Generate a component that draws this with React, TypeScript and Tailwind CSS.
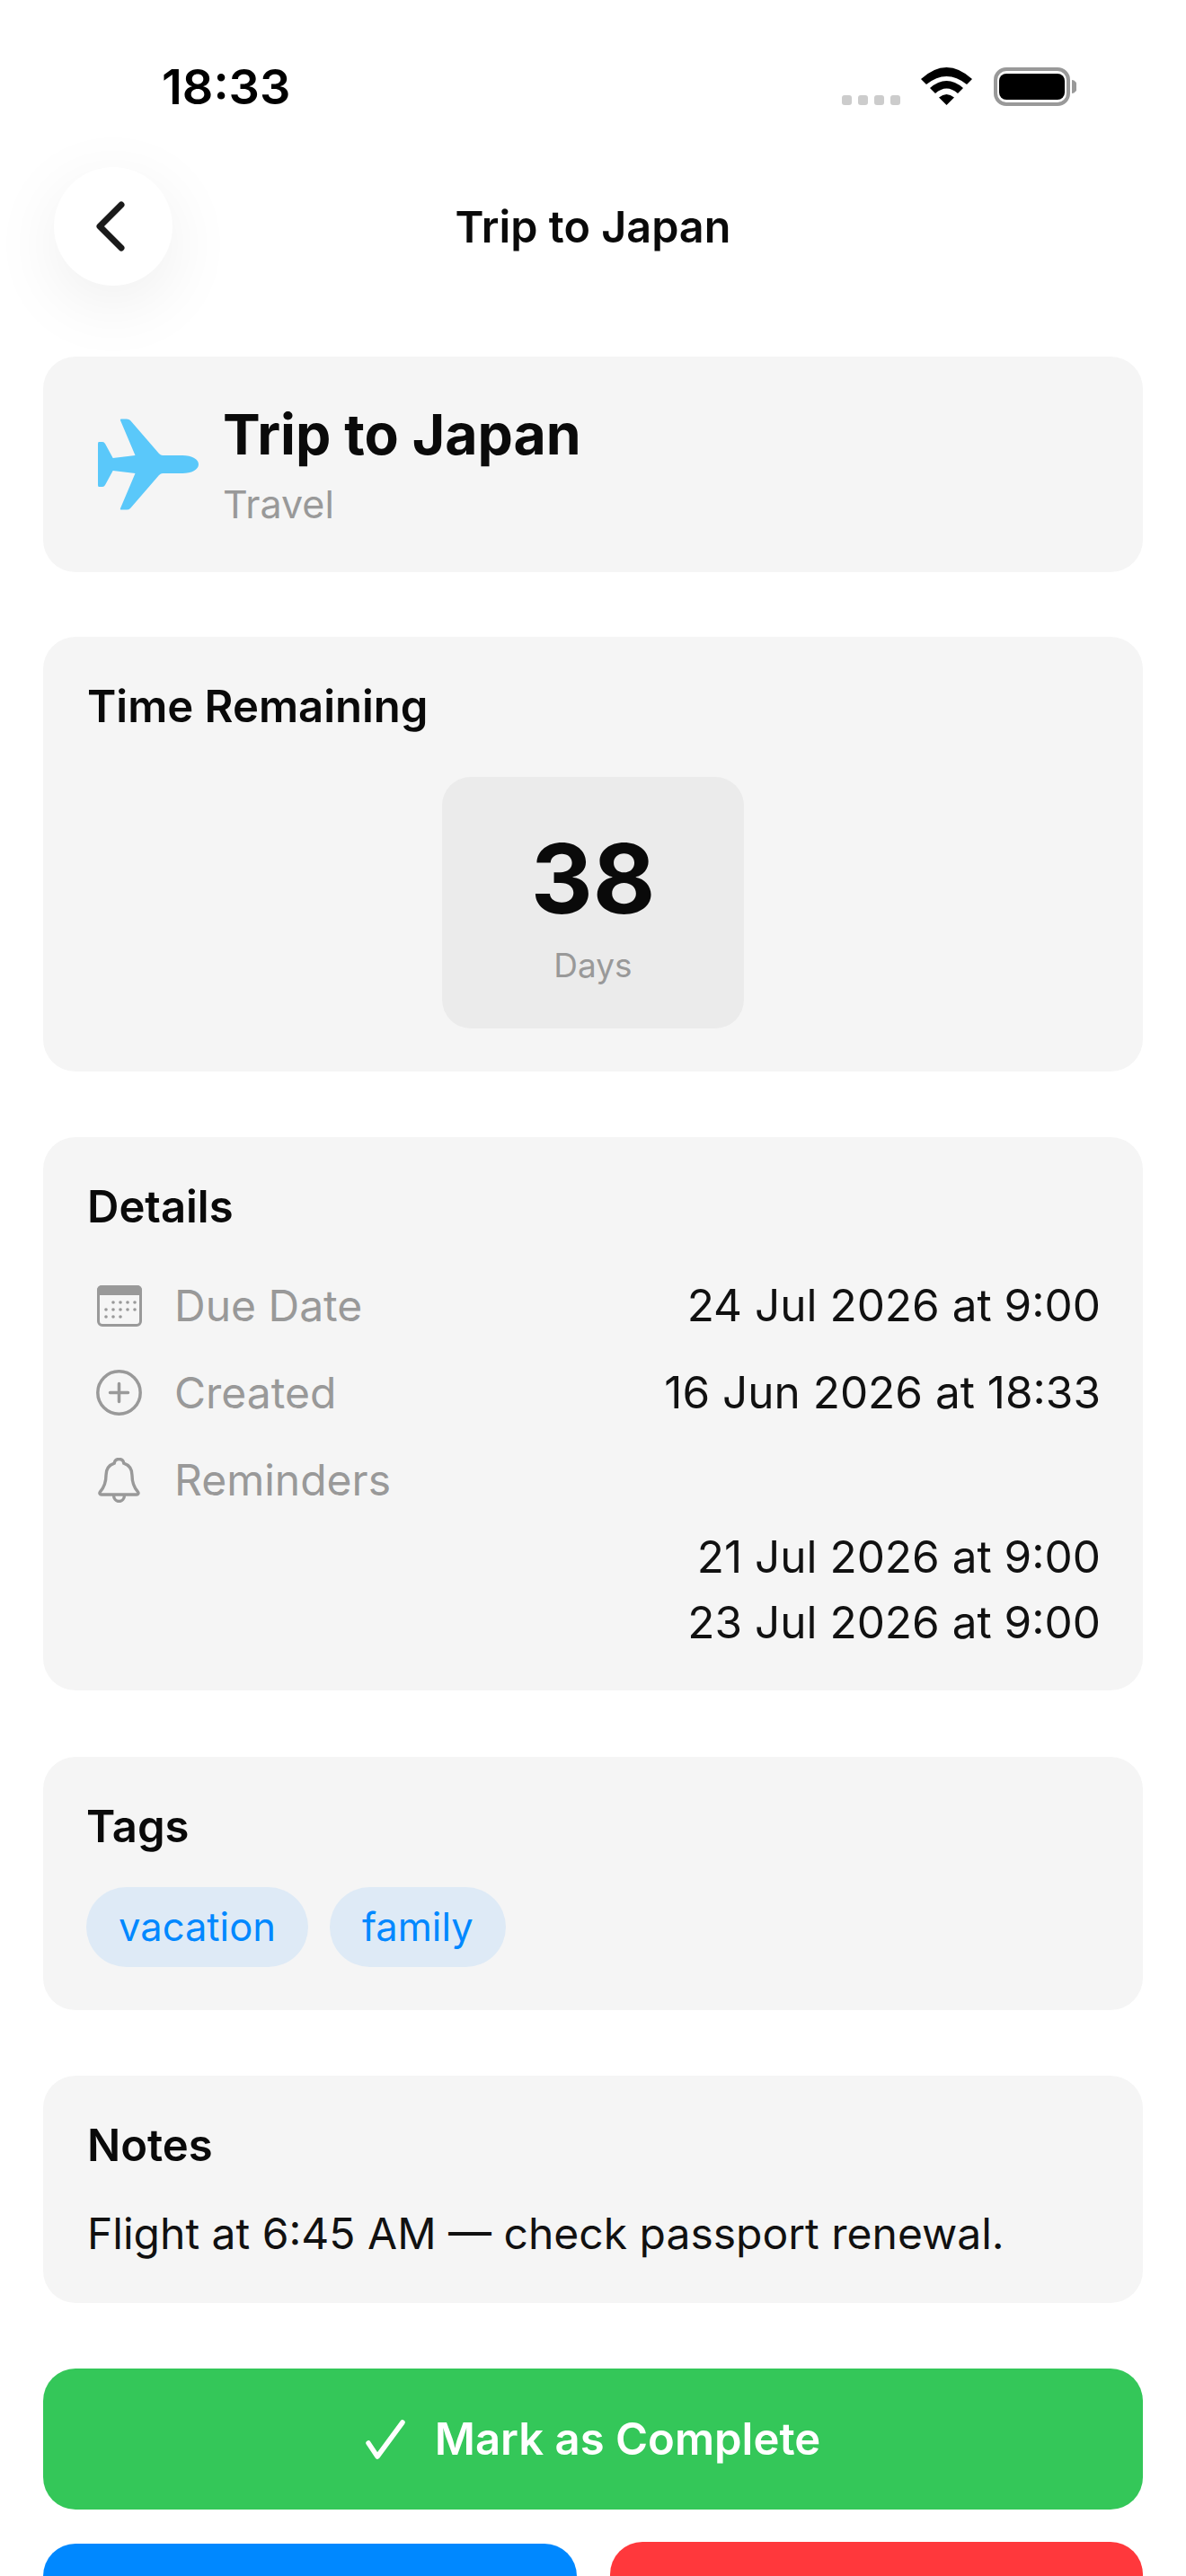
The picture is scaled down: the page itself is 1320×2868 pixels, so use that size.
const font = "font-['Inter',sans-serif]";

function Card({ className, children }: { className: string; children: React.ReactNode }) {
  return <section className={`rounded-[36px] bg-[#f5f5f5] ${className}`}>{children}</section>;
}

function Plane() {
  return (
    <svg viewBox="0 0 112 102" className="h-[102px] w-[112px] shrink-0" fill="#5ac8fa">
      <path d="M112 51C112 45 104 41 94 41L72 41Q70 41 68 39L36 2Q34.5 .5 32 .5L26 .5Q24.5 .5 25 2L41.5 41L16.7 44L8 28Q7 26 5 26L1 26Q0 26 0 28L0 74Q0 76 1 76L5 76Q7 76 8 74L16.7 58L41.5 61L25 100Q24.5 101.5 26 101.5L32 101.5Q34.5 101.5 36 100L68 63Q70 61 72 61L94 61C104 61 112 57 112 51Z" />
    </svg>
  );
}

function CalendarIcon() {
  const dots = [
    [20, 20], [28, 20], [36, 20], [44, 20],
    [12, 28], [20, 28], [28, 28], [36, 28], [44, 28],
    [12, 36], [20, 36], [28, 36],
  ];
  return (
    <svg viewBox="0 0 50 46" className="h-[46px] w-[50px]">
      <rect x="1.5" y="1.5" width="47" height="43" rx="4.5" fill="none" stroke="#999" strokeWidth="3" />
      <path d="M0 11V5a5 5 0 0 1 5-5h40a5 5 0 0 1 5 5v6z" fill="#999" />
      {dots.map(([x, y]) => (
        <circle key={`${x}-${y}`} cx={x - 2} cy={y - 1} r="1.8" fill="#999" />
      ))}
    </svg>
  );
}

function PlusIcon() {
  return (
    <svg viewBox="0 0 51 51" className="h-[51px] w-[51px]" fill="none" stroke="#999" strokeWidth="3.5" strokeLinecap="round">
      <circle cx="25.5" cy="25.5" r="23.7" />
      <path d="M25.5 15.5v20M15.5 25.5h20" />
    </svg>
  );
}

function BellIcon() {
  return (
    <svg viewBox="0 0 47 50" className="h-[50px] w-[47px]" fill="none" stroke="#999" strokeWidth="3.4" strokeLinejoin="round">
      <path d="M23.5 1.5c3.2 0 5 2.2 5.3 4.7 6 2 9.2 7 9.2 13.3 0 8.5 1.6 13 6.4 18.4 1.2 1.4.4 3.1-1.4 3.1H3.900c-1.800 0-2.600-1.700-1.400-3.100C7.300 32.500 9 28 9 19.500 9 13.200 12.200 8.200 18.200 6.200 18.500 3.700 20.300 1.500 23.500 1.500Z" />
      <path d="M17.500 41.500c0 4 2.600 7 6 7s6-3 6-7" />
    </svg>
  );
}

function DetailRow({ icon, label, value }: { icon: React.ReactNode; label: string; value?: string }) {
  return (
    <div className="flex h-[49px] items-center justify-between">
      <div className="flex items-center">
        <div className="flex w-[97px] justify-center pr-[36px] pl-[10px]">{icon}</div>
        <span className="text-[48px] leading-[49px] text-[#999999]">{label}</span>
      </div>
      {value && <span className="text-[49.500px] leading-[49px] text-[#111111]">{value}</span>}
    </div>
  );
}

export default function App() {
  return (
    <main className={`h-[2868px] w-[1320px] overflow-hidden bg-white ${font}`}>
      <div className="flex h-[186px] items-start justify-between pt-[75px] pr-[122px] pl-[180px]">
        <span className="text-[54px] leading-[44px] font-semibold text-black">18:33</span>
        <div className="flex items-start">
          <div className="mt-[31px] mr-[23px] flex gap-[7px]">
            <span className="h-[11px] w-[11px] rounded-[3px] bg-[#cccccc]" />
            <span className="h-[11px] w-[11px] rounded-[3px] bg-[#cccccc]" />
            <span className="h-[11px] w-[11px] rounded-[3px] bg-[#cccccc]" />
            <span className="h-[11px] w-[11px] rounded-[3px] bg-[#cccccc]" />
          </div>
          <svg viewBox="0 0 57 42" className="mr-[24px] h-[42px] w-[57px]" fill="#000">
            <path d="M0 13Q28.500 -13 57 13L51 19Q28.500 1 6 19Z" />
            <path d="M10 23Q28.500 7 47 23L41 29Q28.500 18 16 29Z" />
            <path d="M28.500 42L20 33.500Q28.500 26.500 37 33.500Z" />
          </svg>
          <svg viewBox="0 0 92 43" className="h-[43px] w-[92px]">
            <rect x="2" y="2" width="81" height="39" rx="12" fill="none" stroke="#999" strokeWidth="4" />
            <rect x="6" y="7" width="73" height="29" rx="8" fill="#000" />
            <path d="M87 14a6 7.500 0 0 1 0 15z" fill="#999" />
          </svg>
        </div>
      </div>

      <header className="relative z-10 grid h-[132px] grid-cols-[1fr_auto_1fr] items-center px-[60px]">
        <button className="flex h-[132px] w-[132px] items-center justify-center rounded-full bg-white shadow-[0_20px_80px_rgba(0,0,0,0.07)]">
          <svg viewBox="0 0 32 56" className="mr-[6px] h-[56px] w-[32px]" fill="none" stroke="#1a1a1a" strokeWidth="7" strokeLinecap="round" strokeLinejoin="round">
            <path d="M28 4 4 28l24 24" />
          </svg>
        </button>
        <h1 className="translate-y-[1px] text-[48.500px] leading-[60px] font-semibold text-[#0a0a0a]">Trip to Japan</h1>
      </header>

      <div className="flex flex-col px-[48px] pt-[79px]">
        <Card className="flex h-[240px] items-center pr-[48px] pl-[61px]">
          <Plane />
          <div className="ml-[27px] flex flex-col">
            <h2 className="text-[62.500px] leading-[70px] font-bold text-[#0a0a0a]">Trip to Japan</h2>
            <p className="mt-[17px] text-[43px] leading-[52px] text-[#999999]">Travel</p>
          </div>
        </Card>

        <Card className="mt-[72px] flex h-[484px] flex-col pt-[57px]">
          <h3 className="pl-[49px] text-[49px] leading-[42px] font-semibold text-[#0a0a0a]">Time Remaining</h3>
          <div className="mx-auto mt-[57px] flex h-[280px] w-[336px] flex-col items-center rounded-[32px] bg-[#ebebeb] pt-[50px]">
            <span className="text-[107px] leading-[126px] font-bold text-[#0a0a0a]">38</span>
            <span className="mt-[16px] text-[37px] leading-[36px] text-[#999999]">Days</span>
          </div>
        </Card>

        <Card className="mt-[73px] flex h-[616px] flex-col pt-[57px] pr-[47px] pl-[49px]">
          <h3 className="text-[49px] leading-[42px] font-semibold text-[#0a0a0a]">Details</h3>
          <div className="mt-[64px] flex flex-col gap-[48px]">
            <DetailRow icon={<CalendarIcon />} label="Due Date" value="24 Jul 2026 at 9:00" />
            <DetailRow icon={<PlusIcon />} label="Created" value="16 Jun 2026 at 18:33" />
            <DetailRow icon={<BellIcon />} label="Reminders" />
          </div>
          <div className="mt-[37px] flex flex-col items-end gap-[24px] text-[49.500px] leading-[49px] text-[#111111]">
            <span>21 Jul 2026 at 9:00</span>
            <span>23 Jul 2026 at 9:00</span>
          </div>
        </Card>

        <Card className="mt-[74px] flex h-[282px] flex-col px-[48px] pt-[57px]">
          <h3 className="text-[49px] leading-[42px] font-semibold text-[#0a0a0a]">Tags</h3>
          <div className="mt-[46px] flex gap-[24px]">
            <span className="flex h-[89px] items-center rounded-full bg-[#deeaf6] px-[36px] text-[43.500px] text-[#0088ff]">vacation</span>
            <span className="flex h-[89px] items-center rounded-full bg-[#deeaf6] px-[36px] text-[43.500px] text-[#0088ff]">family</span>
          </div>
        </Card>

        <Card className="mt-[73px] flex h-[253px] flex-col px-[49px] pt-[57px]">
          <h3 className="text-[49px] leading-[42px] font-semibold text-[#0a0a0a]">Notes</h3>
          <p className="mt-[56px] text-[48px] leading-[42px] text-[#111111]">Flight at 6:45 AM — check passport renewal.</p>
        </Card>

        <button className="mt-[73px] flex h-[157px] w-full items-center justify-center rounded-[36px] bg-[#34c759] text-[49px] font-semibold text-white">
          <svg viewBox="0 0 44 44" className="mr-[33px] h-[44px] w-[44px]" fill="none" stroke="#fff" strokeWidth="5.500" strokeLinecap="round" strokeLinejoin="round">
            <path d="M3 26l10 15L41 3" />
          </svg>
          Mark as Complete
        </button>

        <div className="mt-[38px] flex items-start gap-[37px]">
          <div className="h-[157px] flex-1 rounded-[36px] bg-[#0088ff]" />
          <div className="-mt-[2px] h-[157px] flex-1 rounded-[36px] bg-[#ff383c]" />
        </div>
      </div>
    </main>
  );
}
